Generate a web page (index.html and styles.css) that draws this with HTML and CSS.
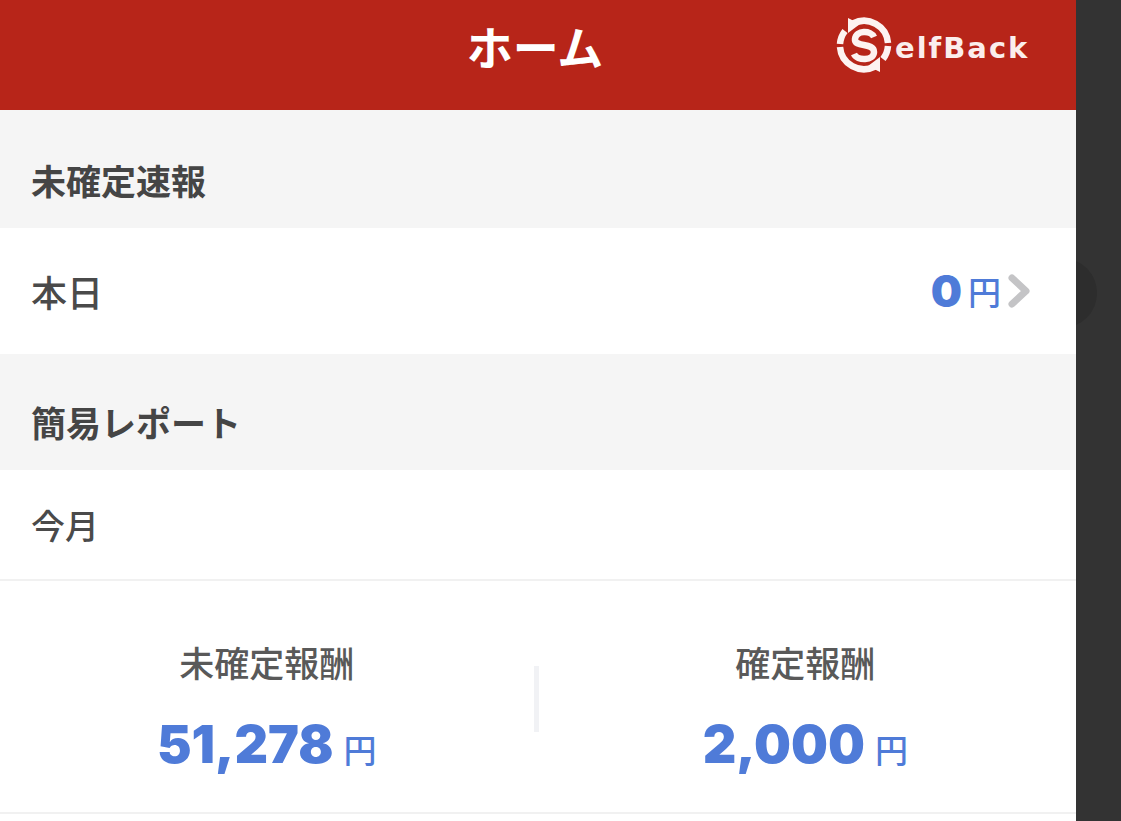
FILE: index.html
```html
<!DOCTYPE html>
<html lang="ja">
<head>
    <meta charset="UTF-8">
    <meta name="viewport" content="width=device-width, initial-scale=1.0">
    <title>ホーム</title>
    <link rel="stylesheet" href="styles.css">
</head>
<body>
    <div class="screen">
        <header class="top-bar">
            <h1>ホーム</h1>
            <div class="logo">
                <svg class="logo-mark" width="56" height="56" viewBox="0 0 56 56" fill="none" stroke="#fdf3f1">
                    <path d="M17 6.5 A24 24 0 0 1 52 26" stroke-width="6.5"/>
                    <path d="M39 49.5 A24 24 0 0 1 4 30" stroke-width="6.5"/>
                    <path d="M4 27 A24 24 0 0 1 9 14" stroke-width="6.5"/>
                    <path d="M52 29 A24 24 0 0 1 47 42" stroke-width="6.5"/>
                    <path d="M12 1 L24 7 L12 16 Z" fill="#fdf3f1" stroke="none"/>
                    <path d="M44 55 L32 49 L44 40 Z" fill="#fdf3f1" stroke="none"/>
                    <path d="M38 20 C35 13 20 13 19 22 C18 31 38 25 38 35 C38 44 21 44 18 37" stroke-width="6.5"/>
                </svg>
                <span class="logo-text">elfBack</span>
            </div>
        </header>

        <div class="section-title title-first">未確定速報</div>
        <div class="row today">
            <span class="row-label">本日</span>
            <span class="amount amount-small">
                <span class="num">0</span><span class="yen">円</span>
                <svg class="chevron" width="24" height="36" viewBox="0 0 24 36" fill="none" stroke="#c4c4c6" stroke-width="7" stroke-linecap="round" stroke-linejoin="round">
                    <path d="M5 5 L19 18 L5 31"/>
                </svg>
            </span>
        </div>

        <div class="section-title title-second">簡易レポート</div>
        <div class="row month">
            <span class="row-label month-label">今月</span>
        </div>

        <div class="stats">
            <div class="stat">
                <div class="stat-label">未確定報酬</div>
                <div class="amount"><span class="num">51,278</span><span class="yen">円</span></div>
            </div>
            <div class="divider"></div>
            <div class="stat">
                <div class="stat-label">確定報酬</div>
                <div class="amount"><span class="num">2,000</span><span class="yen">円</span></div>
            </div>
        </div>
    </div>

    <div class="side">
        <div class="side-circle"></div>
    </div>
</body>
</html>
```

FILE: styles.css
```css
html, body {
    height: 100%;
}
body {
    margin: 0;
    display: flex;
    overflow: hidden;
    background-color: #333333;
    font-family: "Noto Sans CJK JP", "Noto Sans", sans-serif;
    color: #4a4a4a;
}
.screen {
    width: 1076px;
    flex-shrink: 0;
    background-color: #ffffff;
    position: relative;
    z-index: 1;
}
.side {
    flex: 1;
    position: relative;
}
.side-circle {
    position: absolute;
    left: -49px;
    top: 258px;
    width: 70px;
    height: 70px;
    border-radius: 50%;
    background-color: #2d2d2d;
}
.top-bar {
    height: 110px;
    background-color: #b72519;
    display: flex;
    justify-content: center;
    align-items: center;
    position: relative;
}
.top-bar h1 {
    margin: 0 6px 20px 0;
    color: #ffffff;
    font-size: 46px;
    font-weight: 700;
    line-height: 1;
}
.logo {
    position: absolute;
    left: 836px;
    top: 17px;
    display: flex;
    align-items: center;
}
.logo-mark {
    display: block;
}
.logo-text {
    color: #fbeeec;
    font-family: "DejaVu Sans", sans-serif;
    font-size: 29px;
    font-weight: 700;
    letter-spacing: 2px;
    line-height: 1;
    margin: 6px 0 0 3px;
}
.section-title {
    background-color: #f5f5f5;
    padding-left: 31px;
    font-size: 35px;
    font-weight: 700;
    display: flex;
    align-items: center;
    color: #454545;
}
.title-first {
    height: 118px;
    padding-top: 20px;
    box-sizing: border-box;
}
.title-second {
    height: 116px;
    padding-top: 18px;
    box-sizing: border-box;
}
.row {
    display: flex;
    justify-content: space-between;
    align-items: center;
    padding: 0 45px 0 31px;
}
.today {
    height: 126px;
    box-sizing: border-box;
}
.month {
    height: 111px;
    box-sizing: border-box;
    border-bottom: 2px solid #f1f1f1;
}
.row-label {
    font-size: 36px;
    font-weight: 500;
}
.month-label {
    font-size: 34px;
}
.stats {
    height: 233px;
    box-sizing: border-box;
    padding: 56px 4px 0 0;
    border-bottom: 2px solid #f1f1f1;
    display: flex;
    align-items: flex-start;
}
.stat {
    flex: 1;
    text-align: center;
}
.stat-label {
    font-size: 35px;
    font-weight: 500;
    line-height: 50px;
    color: #595959;
    margin-bottom: 28px;
}
.divider {
    width: 5px;
    height: 66px;
    margin-top: 29px;
    background-color: #f1f2f5;
    flex-shrink: 0;
}
.amount {
    color: #4f7bd8;
    display: flex;
    justify-content: center;
    align-items: baseline;
    line-height: 60px;
}
.amount .num {
    font-family: "Inter", "Liberation Sans", sans-serif;
    font-size: 52px;
    font-weight: 900;
}
.amount .yen {
    font-size: 33px;
    font-weight: 500;
    margin-left: 10px;
}
.amount-small {
    align-items: center;
}
.amount-small .num {
    font-size: 44px;
}
.amount-small .yen {
    margin-left: 6px;
}
.chevron {
    margin-left: 6px;
}
```
